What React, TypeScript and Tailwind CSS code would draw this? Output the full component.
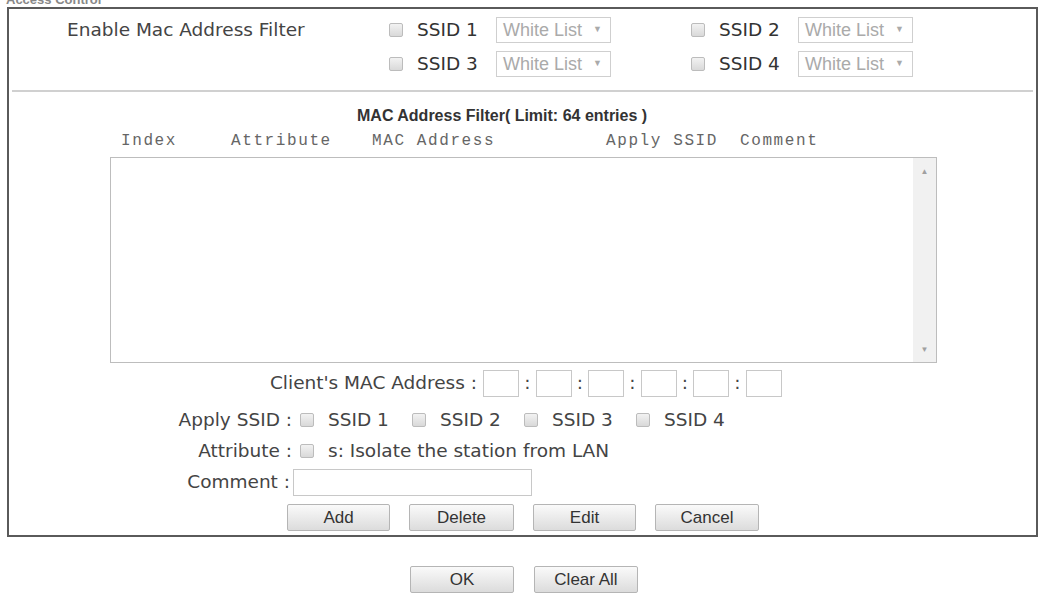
import React from 'react';

const sans = "font-['DejaVu_Sans','Verdana',sans-serif]";
const arial = "font-['Liberation_Sans','Arial',sans-serif]";
const mono = "font-['Liberation_Mono','Courier_New',monospace]";

function Box() {
  return <span className="inline-block w-[14px] h-[14px] shrink-0 rounded-[2px] border border-[#bcbcbc] bg-gradient-to-b from-[#f2f2f2] to-[#d9d9d9]" />;
}

function WhiteList() {
  return (
    <div className={`flex items-center w-[115px] h-[26px] border border-[#cfcfcf] pl-[6px] text-[18px] text-[#aaa] ${arial}`}>
      White List
      <span className="ml-[11px] text-[9px]">▼</span>
    </div>
  );
}

function SsidPick({ n }: { n: number }) {
  return (
    <div className="flex items-center h-[34px]">
      <Box />
      <span className={`ml-[14px] w-[79px] text-[18.5px] text-[#333] ${sans}`}>SSID {n}</span>
      <WhiteList />
    </div>
  );
}

function Btn({ label, w = 'w-[104px]' }: { label: string; w?: string }) {
  return (
    <button className={`${w} h-[27px] border border-[#b5b5b5] rounded-[2px] bg-gradient-to-b from-[#fafafa] to-[#dcdcdc] text-[17px] text-[#333] leading-none ${arial}`}>
      {label}
    </button>
  );
}

export default function App() {
  const headers = [
    { t: 'Index', w: 'w-[110px]' },
    { t: 'Attribute', w: 'w-[141px]' },
    { t: 'MAC Address', w: 'w-[234px]' },
    { t: 'Apply SSID', w: 'w-[134px]' },
    { t: 'Comment', w: '' },
  ];

  return (
    <div className="w-[1043px] h-[598px] bg-white overflow-hidden">
      <div className="h-[7px] overflow-hidden">
        <div className={`-mt-[10px] ml-[6px] text-[13px] font-bold text-[#888] ${arial}`}>Access Control</div>
      </div>

      <div className="ml-[7px] w-[1031px] h-[530px] border-2 border-[#5a5a5a]">
        {/* enable filter */}
        <div className="grid grid-cols-[380px_302px_1fr] pt-[4px]">
          <div className={`pl-[58px] h-[34px] flex items-center text-[18.5px] text-[#444] ${sans}`}>Enable Mac Address Filter</div>
          <SsidPick n={1} />
          <SsidPick n={2} />
          <div />
          <SsidPick n={3} />
          <SsidPick n={4} />
        </div>

        <div className="mx-[3px] mt-[9px] h-[2px] bg-[#d0d0d0]" />

        <div className={`mt-[14px] h-[20px] flex items-center pl-[348px] text-[16px] font-bold text-[#333] ${arial}`}>
          MAC Address Filter( Limit: 64 entries )
        </div>

        <div className={`flex items-center h-[20px] pl-[112px] mt-[5px] text-[16px] tracking-[1.6px] text-[#666] ${mono}`}>
          {headers.map((h) => (
            <span key={h.t} className={h.w}>{h.t}</span>
          ))}
        </div>

        <div className="ml-[101px] mt-[6px] w-[827px] h-[206px] border border-[#bdbdbd] flex justify-end">
          <div className="w-[23px] h-full bg-[#f1f1f1] flex flex-col items-center justify-between py-[7px] text-[8px] text-[#a0a0a0]">
            <span>▲</span>
            <span>▼</span>
          </div>
        </div>

        <div className={`text-[18.5px] text-[#444] ${sans}`}>
          <div className="flex items-center mt-[6px] h-[28px]">
            <span className="w-[468px] text-right">Client&apos;s MAC Address :</span>
            <div className="flex items-center ml-[6px]">
              {[0, 1, 2, 3, 4, 5].map((i) => (
                <React.Fragment key={i}>
                  {i > 0 && <span className="w-[16.5px] text-center">:</span>}
                  <span className="w-[36px] h-[27px] border border-[#c8c8c8]" />
                </React.Fragment>
              ))}
            </div>
          </div>

          <div className="flex items-center mt-[8px] h-[30px]">
            <span className="w-[283px] text-right">Apply SSID :</span>
            <div className="flex items-center ml-[8px]">
              {[1, 2, 3, 4].map((n) => (
                <div key={n} className="flex items-center w-[112px]">
                  <Box />
                  <span className="ml-[14px]">SSID {n}</span>
                </div>
              ))}
            </div>
          </div>

          <div className="flex items-center mt-[1px] h-[30px]">
            <span className="w-[283px] text-right">Attribute :</span>
            <div className="flex items-center ml-[8px]">
              <Box />
              <span className="ml-[14px]">s: Isolate the station from LAN</span>
            </div>
          </div>

          <div className="flex items-center mt-[2px] h-[28px]">
            <span className="w-[281px] text-right">Comment :</span>
            <span className="ml-[3px] w-[239px] h-[27px] border border-[#c8c8c8]" />
          </div>

          <div className="flex gap-[19px] pl-[278px] mt-[8px]">
            <Btn label="Add" w="w-[103px]" />
            <Btn label="Delete" w="w-[105px]" />
            <Btn label="Edit" w="w-[103px]" />
            <Btn label="Cancel" w="w-[104px]" />
          </div>
        </div>
      </div>

      <div className="flex gap-[20px] pl-[410px] mt-[29px]">
        <Btn label="OK" />
        <Btn label="Clear All" />
      </div>
    </div>
  );
}
